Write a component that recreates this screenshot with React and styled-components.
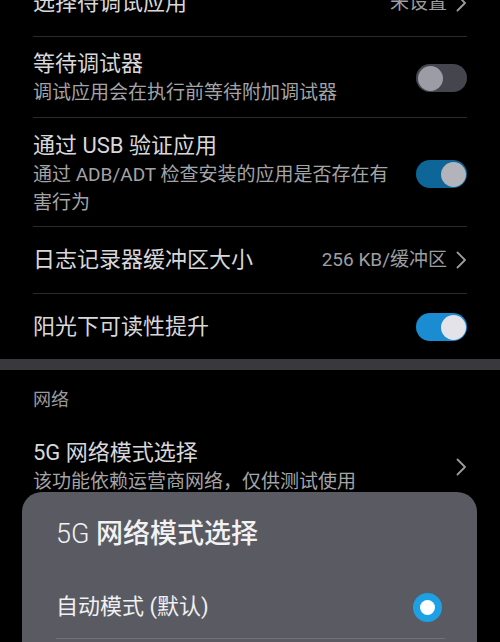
import React from "react";
import styled, { createGlobalStyle } from "styled-components";

const Global = createGlobalStyle`
  html, body { margin: 0; padding: 0; background: #000; }
  body { overflow: hidden; font-family: Roboto, "Noto Sans CJK SC", sans-serif; }
`;

const Screen = styled.div`
  position: relative;
  width: 500px;
  height: 642px;
  overflow: hidden;
  background: #000;
`;

const Group = styled.div`
  padding: 0 33px;
  margin-top: ${(p) => p.$offset || 0}px;
`;

const Row = styled.div`
  display: flex;
  align-items: center;
  justify-content: space-between;
  gap: 18px;
  padding: ${(p) => (p.$pad ? p.$pad : "18px 0")};
  border-bottom: ${(p) => (p.$divider ? "1px solid #2a2a2c" : "none")};
`;

const TextCol = styled.div`
  display: flex;
  flex-direction: column;
  min-width: 0;
  flex: 1;
`;

const Title = styled.div`
  font-size: 22px;
  line-height: 30px;
  color: #d8d8da;
  white-space: nowrap;
`;

const Sub = styled.div`
  font-size: 19px;
  line-height: 28px;
  color: #a4a4a6;
  max-width: 370px;
`;

const Value = styled.div`
  display: flex;
  align-items: center;
  gap: 9px;
  font-size: 19px;
  line-height: 30px;
  color: #9e9ea0;
  white-space: nowrap;
`;

const Chevron = () => (
  <svg width="11" height="18" viewBox="0 0 11 18" fill="none">
    <polyline
      points="1.5,1.5 9,9 1.5,16.5"
      stroke="#9c9c9e"
      strokeWidth="1.8"
      strokeLinecap="round"
      strokeLinejoin="round"
    />
  </svg>
);

const tones = {
  off: { track: "#45454d", knob: "#9c9ca6" },
  dim: { track: "#0e6597", knob: "#b3b3bb" },
  on: { track: "#1b8bd2", knob: "#e3e3e9" },
};

const Track = styled.div`
  flex: none;
  width: 51px;
  height: 28px;
  border-radius: 14px;
  background: ${(p) => tones[p.$tone].track};
  display: flex;
  align-items: center;
  justify-content: ${(p) => (p.$tone === "off" ? "flex-start" : "flex-end")};
  padding: 0 1.5px;
  box-sizing: border-box;
`;

const Knob = styled.div`
  width: 25px;
  height: 25px;
  border-radius: 50%;
  background: ${(p) => tones[p.$tone].knob};
`;

const Toggle = ({ tone }) => (
  <Track $tone={tone}>
    <Knob $tone={tone} />
  </Track>
);

const Band = styled.div`
  height: 11px;
  background: #38383d;
`;

const SectionHeader = styled.div`
  font-size: 18px;
  line-height: 26px;
  color: #9a9a9c;
  padding: 17px 0 14px;
`;

const Sheet = styled.div`
  position: absolute;
  top: 492px;
  left: 22px;
  right: 23px;
  height: 200px;
  background: #5a5b62;
  border-radius: 20px 20px 0 0;
  padding: 24px 35px 0 34px;
  box-sizing: border-box;
`;

const SheetTitle = styled.div`
  font-size: 27px;
  line-height: 36px;
  color: #f2f2f4;
  font-weight: 500;
  margin-bottom: 24px;
`;

const Latin = styled.span`
  font-weight: 300;
`;

const Option = styled.div`
  display: flex;
  align-items: center;
  justify-content: space-between;
  height: 62px;
  border-bottom: 1px solid #717279;
  margin-right: -3px;
`;

const OptionLabel = styled.div`
  font-size: 22px;
  line-height: 30px;
  color: #f0f0f2;
`;

const Radio = styled.div`
  width: 29px;
  height: 29px;
  border-radius: 50%;
  background: #1ea0e4;
  display: flex;
  align-items: center;
  justify-content: center;
  margin-right: 3px;
  &::after {
    content: "";
    width: 15px;
    height: 15px;
    border-radius: 50%;
    background: #ffffff;
  }
`;

export default function App() {
  return (
    <Screen>
      <Global />
      <Group $offset={-30}>
        <Row $divider>
          <Title>选择待调试应用</Title>
          <Value>
            未设置
            <Chevron />
          </Value>
        </Row>
        <Row $divider $pad="12px 0 10px">
          <TextCol>
            <Title>等待调试器</Title>
            <Sub>调试应用会在执行前等待附加调试器</Sub>
          </TextCol>
          <Toggle tone="off" />
        </Row>
        <Row $divider $pad="13px 0 9px">
          <TextCol>
            <Title>通过 USB 验证应用</Title>
            <Sub>通过 ADB/ADT 检查安装的应用是否存在有害行为</Sub>
          </TextCol>
          <Toggle tone="dim" />
        </Row>
        <Row $divider>
          <Title>日志记录器缓冲区大小</Title>
          <Value>
            256 KB/缓冲区
            <Chevron />
          </Value>
        </Row>
        <Row $pad="18px 0 17px">
          <Title>阳光下可读性提升</Title>
          <Toggle tone="on" />
        </Row>
      </Group>
      <Band />
      <Group>
        <SectionHeader>网络</SectionHeader>
        <Row $pad="11px 0 10px">
          <TextCol>
            <Title>5G 网络模式选择</Title>
            <Sub>该功能依赖运营商网络，仅供测试使用</Sub>
          </TextCol>
          <Chevron />
        </Row>
      </Group>
      <Sheet>
        <SheetTitle>
          <Latin>5G </Latin>网络模式选择
        </SheetTitle>
        <Option>
          <OptionLabel>自动模式 (默认)</OptionLabel>
          <Radio />
        </Option>
      </Sheet>
    </Screen>
  );
}
